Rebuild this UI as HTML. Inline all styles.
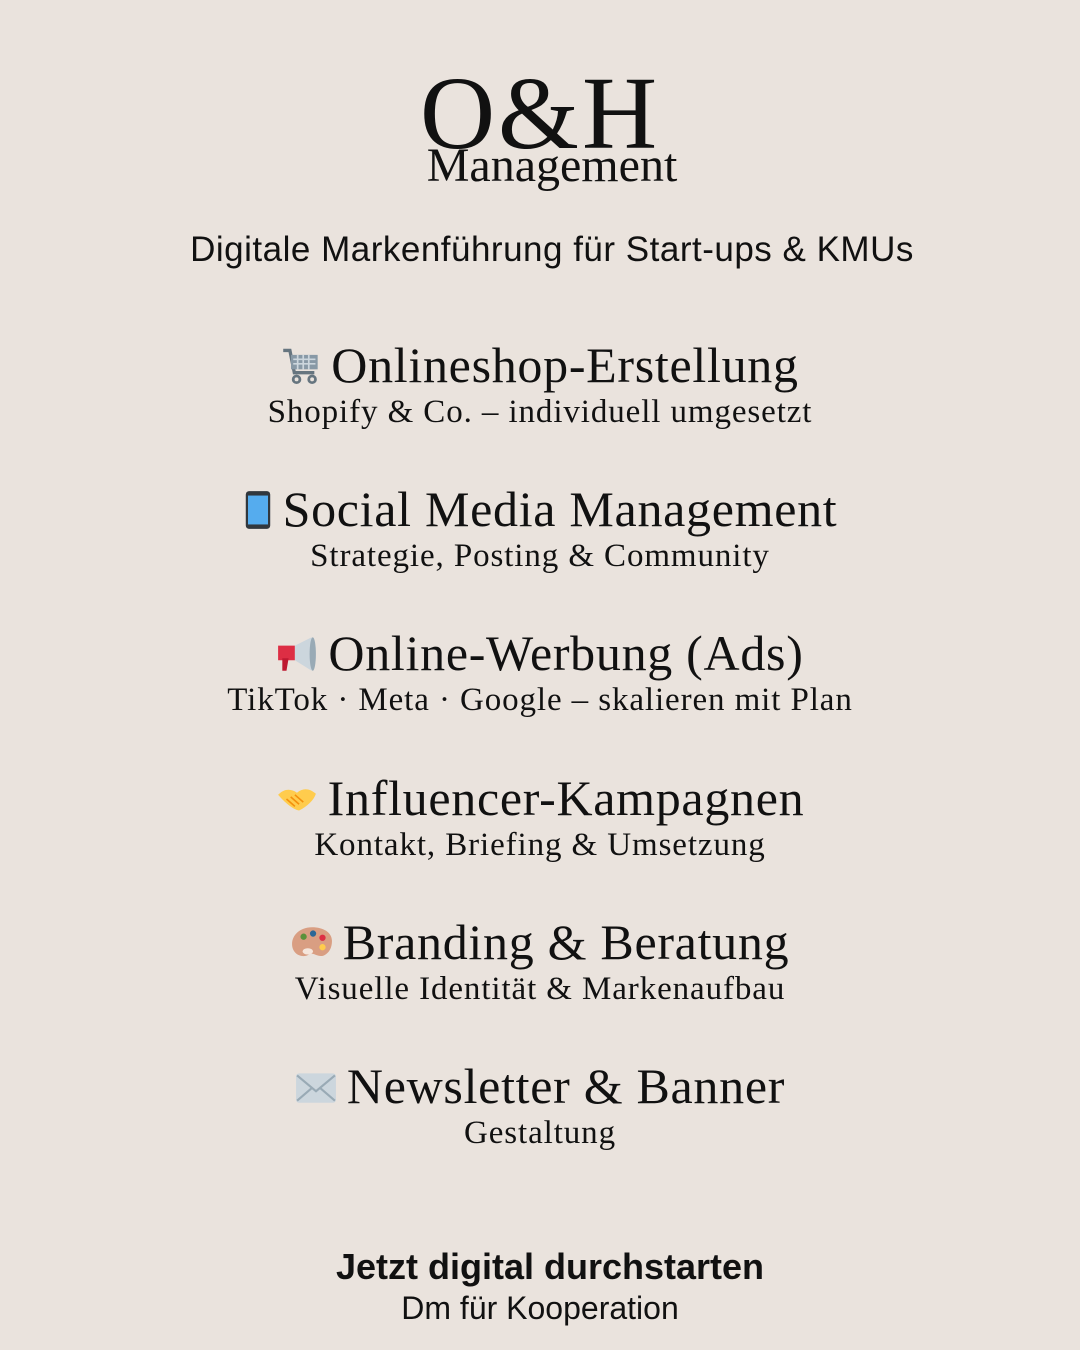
<!DOCTYPE html>
<html><head><meta charset="utf-8"><style>
body{margin:0;width:1080px;height:1350px;background:#eae3dd;position:relative;overflow:hidden;color:#111;font-family:"Liberation Serif",serif}
.a{position:absolute;left:0;width:1080px;text-align:center;white-space:nowrap}
.h{font-size:50px;line-height:56px;letter-spacing:0.7px}
.s{font-size:33px;line-height:36px;letter-spacing:0.9px}
.sans{font-family:"Liberation Sans",sans-serif}
svg{vertical-align:-4px;margin-right:10px}
</style></head><body>
<div class="a" style="top:59px;font-size:104px;line-height:110px;left:0;letter-spacing:3px">O&amp;H</div>
<div class="a" style="top:141px;font-size:48px;line-height:50px;left:12px">Management</div>
<div class="a sans" style="top:229px;font-size:35px;line-height:42px;left:12px;letter-spacing:0.5px">Digitale Markenführung für Start-ups &amp; KMUs</div>

<div class="a h" style="top:337px;left:0"><svg width="40" height="40" viewBox="0 0 36 36"><path d="M2 4h6l4 20h18" fill="none" stroke="#66757f" stroke-width="3"/><rect x="9" y="8" width="24" height="13" fill="#8899a6"/><path d="M11 12h20M11 16h20M15 8v13M20 8v13M25 8v13" stroke="#ccd6dd" stroke-width="1.5"/><circle cx="14" cy="30" r="3" fill="none" stroke="#66757f" stroke-width="2.5"/><circle cx="28" cy="30" r="3" fill="none" stroke="#66757f" stroke-width="2.5"/></svg>Onlineshop-Erstellung</div>
<div class="a s" style="top:394px;left:0">Shopify &amp; Co. – individuell umgesetzt</div>

<div class="a h" style="top:481px;left:0"><svg width="30" height="40" viewBox="0 0 24 36"><rect x="1" y="1" width="22" height="34" rx="3" fill="#31373d"/><rect x="3" y="5" width="18" height="26" fill="#55acee"/></svg>Social Media Management</div>
<div class="a s" style="top:538px;left:0">Strategie, Posting &amp; Community</div>

<div class="a h" style="top:625px;left:0"><svg width="42" height="40" viewBox="0 0 40 36"><path d="M2 10h16v14H2z" fill="#dd2e44"/><path d="M6 22h6l-2 12H6z" fill="#be1931"/><path d="M18 10L34 2v32L18 24z" fill="#ccd6dd"/><ellipse cx="35" cy="18" rx="3" ry="16" fill="#99aab5"/></svg>Online-Werbung (Ads)</div>
<div class="a s" style="top:682px;left:0">TikTok · Meta · Google – skalieren mit Plan</div>

<div class="a h" style="top:770px;left:0"><svg width="42" height="40" viewBox="0 0 40 36"><path d="M2 14c6-6 12-6 18-2 6-5 12-4 18 1-2 6-8 12-16 16-6-1-14-8-20-15z" fill="#ffcc4d"/><path d="M10 18l8 7M14 16l8 7M18 14l8 7" stroke="#f4900c" stroke-width="1.5"/></svg>Influencer-Kampagnen</div>
<div class="a s" style="top:827px;left:0">Kontakt, Briefing &amp; Umsetzung</div>

<div class="a h" style="top:914px;left:0"><svg width="42" height="40" viewBox="0 0 40 36"><path d="M20 3C8 3 1 11 1 19c0 10 10 14 16 10 4-3 8 3 14 1 7-3 8-10 8-14C39 8 31 3 20 3z" fill="#d99e82"/><ellipse cx="16" cy="26" rx="5" ry="3" fill="#f5e6dc"/><circle cx="12" cy="12" r="3" fill="#5c913b"/><circle cx="21" cy="9" r="3" fill="#2a6797"/><circle cx="30" cy="13" r="3" fill="#dd2e44"/><circle cx="30" cy="22" r="3" fill="#ffcc4d"/></svg>Branding &amp; Beratung</div>
<div class="a s" style="top:971px;left:0">Visuelle Identität &amp; Markenaufbau</div>

<div class="a h" style="top:1058px;left:0"><svg width="42" height="40" viewBox="0 0 40 36"><rect x="1" y="5" width="38" height="28" rx="3" fill="#ccd6dd"/><path d="M2 7l18 15 18-15M2 31l14-12M38 31L24 19" fill="none" stroke="#99aab5" stroke-width="2"/></svg>Newsletter &amp; Banner</div>
<div class="a s" style="top:1115px;left:0">Gestaltung</div>

<div class="a sans" style="top:1245px;font-size:36px;line-height:44px;font-weight:bold;left:10px">Jetzt digital durchstarten</div>
<div class="a sans" style="top:1289px;font-size:32px;line-height:38px;left:0">Dm für Kooperation</div>
</body></html>
